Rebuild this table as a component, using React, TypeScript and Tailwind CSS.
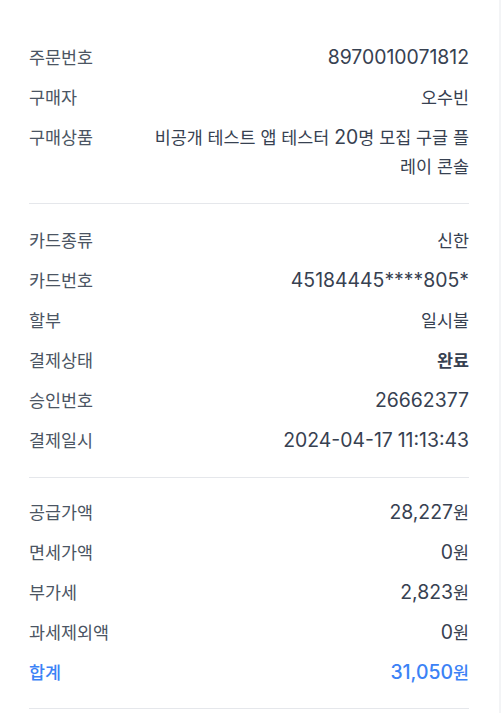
type Row = { label: string; value: string; strong?: boolean; accent?: boolean };

const SECTIONS: Row[][] = [
  [
    { label: '주문번호', value: '8970010071812' },
    { label: '구매자', value: '오수빈' },
    { label: '구매상품', value: '비공개 테스트 앱 테스터 20명 모집 구글 플레이 콘솔' },
  ],
  [
    { label: '카드종류', value: '신한' },
    { label: '카드번호', value: '45184445****805*' },
    { label: '할부', value: '일시불' },
    { label: '결제상태', value: '완료', strong: true },
    { label: '승인번호', value: '26662377' },
    { label: '결제일시', value: '2024-04-17 11:13:43' },
  ],
  [
    { label: '공급가액', value: '28,227원' },
    { label: '면세가액', value: '0원' },
    { label: '부가세', value: '2,823원' },
    { label: '과세제외액', value: '0원' },
    { label: '합계', value: '31,050원', accent: true },
  ],
];

// hangul glyphs sit smaller than latin digits in the original font, so split runs
function splitRuns(text: string) {
  const runs: { text: string; hangul: boolean }[] = [];
  for (const ch of text) {
    const hangul = /[\uac00-\ud7a3 ]/.test(ch);
    const last = runs[runs.length - 1];
    if (last && last.hangul === hangul) last.text += ch;
    else runs.push({ text: ch, hangul });
  }
  return runs;
}

function Mixed({ text }: { text: string }) {
  return (
    <>
      {splitRuns(text).map((r, i) => (
        <span key={i} className={r.hangul ? 'text-[17.4px] leading-none' : 'leading-none'}>
          {r.text}
        </span>
      ))}
    </>
  );
}

function DetailRow({ row }: { row: Row }) {
  const labelColor = row.accent ? 'text-[#3b82f6] font-medium' : 'text-[#4b5563]';
  const valueColor = row.accent
    ? 'text-[#3b82f6] font-medium'
    : row.strong
      ? 'text-[#374151] font-semibold'
      : 'text-[#374151]';

  return (
    <div className="flex items-start justify-between gap-6">
      <span className={`shrink-0 text-[17.4px] leading-[29px] ${labelColor}`}>{row.label}</span>
      <span className={`max-w-[316px] break-all text-right text-[19.4px] leading-[29px] ${valueColor}`}>
        <Mixed text={row.value} />
      </span>
    </div>
  );
}

export default function App() {
  const pads = ['py-[22px]', 'py-[22px]', 'pt-[20px] pb-[21px]'];
  return (
    <div
      className="flex min-h-[713px] w-[501px] bg-white"
      style={{ fontFamily: 'Inter, "Noto Sans CJK KR", sans-serif' }}
    >
      <div className="w-[499px] pl-[29px] pr-[30px] pt-[21px]">
        {SECTIONS.map((rows, i) => (
          <div key={i} className={`flex flex-col gap-[11px] border-b border-[#e5e7eb] ${pads[i]}`}>
            {rows.map(row => (
              <DetailRow key={row.label} row={row} />
            ))}
          </div>
        ))}
      </div>
      <div className="w-[2px] bg-[#f3f4f6]" />
    </div>
  );
}
